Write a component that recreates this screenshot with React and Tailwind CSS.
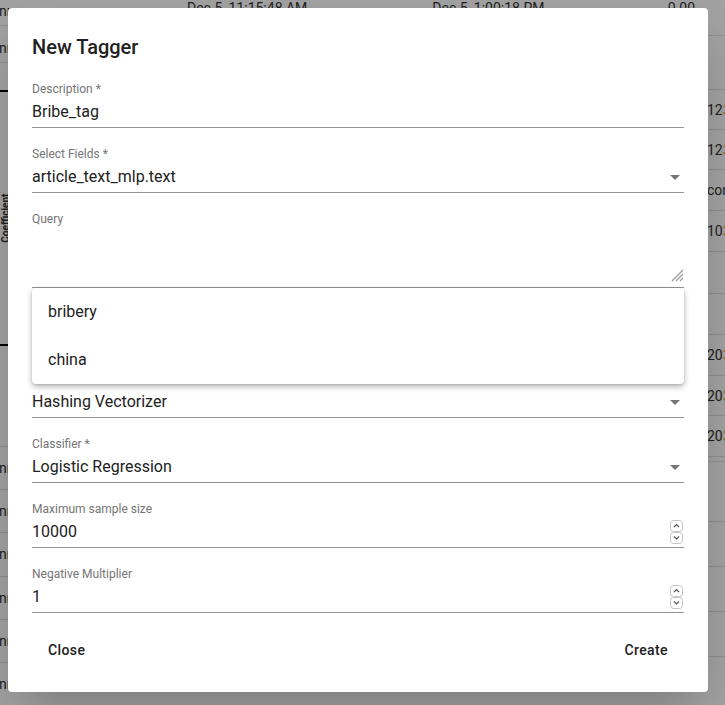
import { Fragment } from "react";

const font = { fontFamily: "Roboto, 'Liberation Sans', sans-serif" };

// rows of the table behind the dialog (only the edges show)
const leftRows = [
  { h: "h-[27px]", text: "nnn" },
  { h: "h-[38px]", text: "nnn" },
];
const leftBottomRows = ["nnn", "nnn", "nnn", "nnn", "nnn", "nnn"];
const rightRows = [
  { h: "h-[36px]", text: "" },
  { h: "h-[54px]", text: "" },
  { h: "h-[40px]", text: "12" },
  { h: "h-[40px]", text: "12" },
  { h: "h-[41px]", text: "con" },
  { h: "h-[41px]", text: "10" },
  { h: "h-[42px]", text: "" },
  { h: "h-[41px]", text: "" },
  { h: "h-[41px]", text: "20" },
  { h: "h-[40px]", text: "20" },
  { h: "h-[41px]", text: "20" },
  { h: "h-[5px]", text: "" },
  { h: "h-[60px]", text: "" },
  { h: "h-[45px]", text: "" },
  { h: "h-[45px]", text: "" },
  { h: "h-[45px]", text: "" },
];

function Arrow() {
  return (
    <svg width="10" height="5" viewBox="0 0 10 5" className="mr-[4px] shrink-0">
      <path d="M0 0 L10 0 L5 5 Z" fill="#757575" />
    </svg>
  );
}

function Spinner() {
  return (
    <svg width="13" height="24" viewBox="0 0 13 24" className="mr-[1px] shrink-0">
      <rect x="0.5" y="0.5" width="12" height="11" rx="3" fill="#fff" stroke="#c4c4c4" />
      <rect x="0.5" y="12.5" width="12" height="11" rx="3" fill="#fff" stroke="#c4c4c4" />
      <path d="M4 7 L6.5 4.5 L9 7" fill="none" stroke="#555" strokeWidth="1.2" />
      <path d="M4 16.5 L6.5 19 L9 16.5" fill="none" stroke="#555" strokeWidth="1.2" />
    </svg>
  );
}

function Field({ label, value, kind }) {
  return (
    <div className="flex flex-col">
      <span className="text-xs leading-4 text-[#757575]">{label}</span>
      <div className="mt-[3px] h-[28px] pb-[3px] border-b border-[#949494] flex items-center justify-between">
        <span className="text-base leading-6 text-[#212121]">{value}</span>
        {kind === "select" && <Arrow />}
        {kind === "number" && <Spinner />}
      </div>
    </div>
  );
}

export default function App() {
  return (
    <div className="relative w-full h-[705px] overflow-hidden bg-white text-[#333]" style={font}>
      {/* Page behind the dialog */}
      <div className="flex h-full">
        <div className="w-[40px] flex flex-col text-sm">
          {leftRows.map((r, i) => (
            <div key={i} className={`${r.h} flex items-end pb-[4px] border-b border-[#e0e0e0] -ml-[1px]`}>
              <span className="whitespace-nowrap">{r.text}</span>
            </div>
          ))}
          <div className="h-[28px]" />
          <div className="h-[268px] border-y-2 border-black flex items-center">
            <span className="text-[10px] font-bold -rotate-90 -ml-[18px] whitespace-nowrap">Coefficient</span>
          </div>
          <div className="h-[104px]" />
          {leftBottomRows.map((t, i) => (
            <div key={i} className="h-[45px] flex items-center border-t border-[#e0e0e0] -ml-[1px]">
              <span className="whitespace-nowrap">{t}</span>
            </div>
          ))}
        </div>
        <div className="flex-1 flex text-sm -mt-[2px] h-[20px]">
          <span className="ml-[147px] whitespace-nowrap">Dec 5, 11:15:48 AM</span>
          <span className="ml-[125px] whitespace-nowrap">Dec 5, 1:00:18 PM</span>
          <span className="ml-auto mr-[10px]">0.00</span>
        </div>
        <div className="w-[20px] flex flex-col text-sm">
          {rightRows.map((r, i) => (
            <div key={i} className={`${r.h} flex items-center border-b border-[#e0e0e0] pl-[2px]`}>
              <span className="whitespace-nowrap">
                {r.text}
                {r.text && r.text.length === 2 && <span className="text-[#f5a623]">3</span>}
              </span>
            </div>
          ))}
        </div>
      </div>

      {/* Backdrop + dialog */}
      <div className="absolute inset-0 bg-black/[0.37] p-2 flex">
        <div className="relative w-[700px] h-[684px] bg-white rounded shadow-2xl flex flex-col px-6 pt-[23px]">
          <h2 className="text-xl leading-8 font-medium text-[#212121]">New Tagger</h2>

          <div className="mt-[18px] flex flex-col gap-[18px]">
            <Field label="Description *" value="Bribe_tag" />
            <Field label="Select Fields *" value="article_text_mlp.text" kind="select" />
            <div className="flex flex-col">
              <span className="text-xs leading-4 text-[#757575]">Query</span>
              <div className="mt-[3px] h-[58px] pb-[3px] border-b border-[#949494] flex items-end justify-end">
                <svg width="14" height="14" viewBox="0 0 14 14" className="mb-[2px]">
                  <path d="M13 2 L2 13 M13 6 L6 13 M13 10 L10 13" stroke="#9a9a9a" strokeWidth="1.2" />
                </svg>
              </div>
            </div>
            <Field label="Embedding" value="-" kind="select" />
            <Field label="Vectorizer *" value="Hashing Vectorizer" kind="select" />
            <Field label="Classifier *" value="Logistic Regression" kind="select" />
            <Field label="Maximum sample size" value="10000" kind="number" />
            <Field label="Negative Multiplier" value="1" kind="number" />
          </div>

          <div className="mt-[19px] flex justify-between">
            {["Close", "Create"].map((b) => (
              <Fragment key={b}>
                <button className="h-9 px-4 rounded text-sm font-medium tracking-[0.4px] text-[#212121]">{b}</button>
              </Fragment>
            ))}
          </div>

          {/* open query suggestion menu */}
          <div className="absolute left-6 right-6 top-[280px] bg-white rounded shadow-[0_3px_6px_rgba(0,0,0,0.25),0_1px_3px_rgba(0,0,0,0.15)] flex flex-col">
            <div className="h-12 px-4 flex items-center text-base text-[#212121]">bribery</div>
            <div className="h-12 px-4 flex items-center text-base text-[#212121]">china</div>
          </div>
        </div>
      </div>
    </div>
  );
}
